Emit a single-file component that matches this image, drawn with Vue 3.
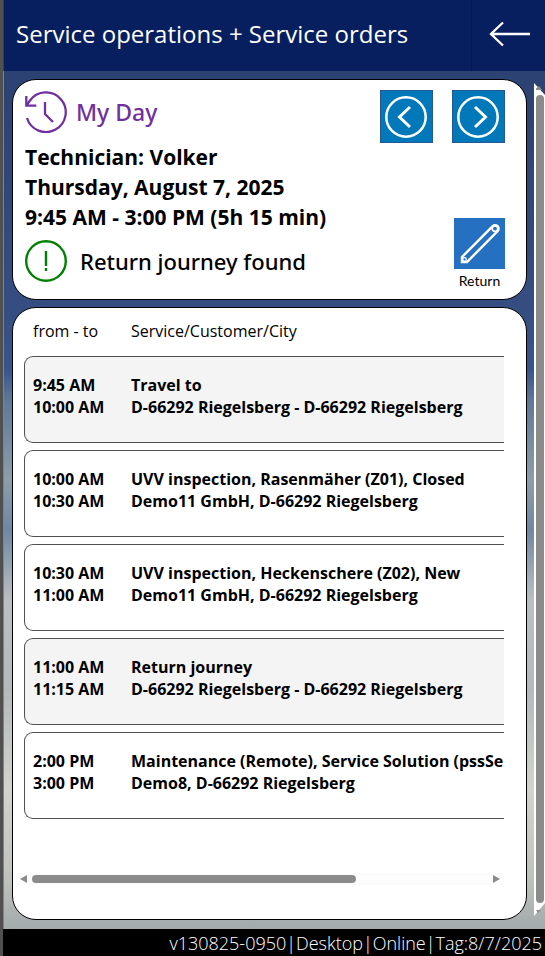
<script setup>
const entries = [
  { from: '9:45 AM', to: '10:00 AM', title: 'Travel to', place: 'D-66292 Riegelsberg - D-66292 Riegelsberg', travel: true },
  { from: '10:00 AM', to: '10:30 AM', title: 'UVV inspection, Rasenmäher (Z01), Closed', place: 'Demo11 GmbH, D-66292 Riegelsberg', travel: false },
  { from: '10:30 AM', to: '11:00 AM', title: 'UVV inspection, Heckenschere (Z02), New', place: 'Demo11 GmbH, D-66292 Riegelsberg', travel: false },
  { from: '11:00 AM', to: '11:15 AM', title: 'Return journey', place: 'D-66292 Riegelsberg - D-66292 Riegelsberg', travel: true },
  { from: '2:00 PM', to: '3:00 PM', title: 'Maintenance (Remote), Service Solution (pssSe', place: 'Demo8, D-66292 Riegelsberg', travel: false },
]
</script>

<template>
  <div class="app">
    <header class="topbar">
      <h1>Service operations + Service orders</h1>
      <button class="back" type="button" aria-label="Back">
        <svg width="42" height="26" viewBox="0 0 42 26" fill="none" stroke="#fff" stroke-width="2.300">
          <path d="M41 13H2M14 1.500L2 13l12 11.500" />
        </svg>
      </button>
    </header>

    <div class="body">
      <main class="cards">
        <section class="card summary">
          <div class="heading">
            <div class="brand">
              <svg width="42" height="42" viewBox="0 0 42 42" fill="none" stroke="#7030a0" stroke-width="2.300">
                <path d="M2 27A19.800 19.800 0 1 0 5 9.500L1.500 14.500" />
                <path d="M1.300 5v9.700h10" />
                <path d="M20 11v12l8 8" />
              </svg>
              <h2>My Day</h2>
            </div>
            <nav class="days">
              <button class="step" type="button" aria-label="Previous day">
                <svg width="42" height="42" viewBox="0 0 42 42" fill="none" stroke="#fff">
                  <circle cx="21" cy="21" r="19.700" stroke-width="2.500" />
                  <path d="M25 11L14.500 21 25 31" stroke-width="3" />
                </svg>
              </button>
              <button class="step" type="button" aria-label="Next day">
                <svg width="42" height="42" viewBox="0 0 42 42" fill="none" stroke="#fff">
                  <circle cx="21" cy="21" r="19.700" stroke-width="2.500" />
                  <path d="M18 11l10.500 10L18 31" stroke-width="3" />
                </svg>
              </button>
            </nav>
          </div>
          <div class="details">
            <div class="facts">
              <p>Technician: Volker</p>
              <p>Thursday, August 7, 2025</p>
              <p>9:45 AM - 3:00 PM (5h 15 min)</p>
              <div class="status">
                <svg width="42" height="42" viewBox="0 0 42 42" fill="none" stroke="#008000" stroke-width="2.400">
                  <circle cx="21" cy="21" r="19.800" />
                  <path d="M21 11v15M21 28v3" />
                </svg>
                <span>Return journey found</span>
              </div>
            </div>
            <button class="return" type="button">
              <span class="tile">
                <svg width="51" height="51" viewBox="0 0 51 51" fill="none" stroke="#fff" stroke-width="2.400">
                  <path d="M8 44v-5L38.700 8.200a3.300 3.300 0 0 1 4.900 4.900L13 44z" />
                  <circle cx="41" cy="10.600" r="2.800" stroke-width="1.700" />
                  <circle cx="10.500" cy="41.500" r="1.800" stroke-width="1.200" />
                </svg>
              </span>
              Return
            </button>
          </div>
        </section>

        <section class="card plan">
          <div class="cols">
            <span>from - to</span>
            <span>Service/Customer/City</span>
          </div>
          <ul class="list">
            <li v-for="e in entries" :key="e.from" :class="{ travel: e.travel }">
              <span>{{ e.from }}<br />{{ e.to }}</span>
              <span>{{ e.title }}<br />{{ e.place }}</span>
            </li>
          </ul>
          <div class="hbar">
            <svg width="7" height="8" viewBox="0 0 7 8"><path d="M7 0v8L0 4z" fill="#8b8b8b" /></svg>
            <div class="track"><div class="thumb"></div></div>
            <svg width="7" height="8" viewBox="0 0 7 8"><path d="M0 0v8l7-4z" fill="#8b8b8b" /></svg>
          </div>
        </section>
      </main>
      <div class="vbar">
        <svg width="11" height="12" viewBox="0 0 11 12"><path d="M0 0l11 12H0z" fill="#fff" /><path d="M2 7V5.500L5 3l3 4z" fill="#8b8b8b" /></svg>
        <div class="vtrack"><div class="vthumb"></div></div>
        <svg width="11" height="13" viewBox="0 0 11 13"><path d="M0 13L11 0H0z" fill="#fff" /><path d="M2 7h5L4 10z" fill="#8b8b8b" /></svg>
      </div>
    </div>

    <footer>v130825-0950|Desktop|Online|Tag:8/7/2025</footer>
  </div>
</template>

<style>
body {
  margin: 0;
}
</style>

<style scoped>
* {
  box-sizing: border-box;
}
h1, h2, p, ul {
  margin: 0;
  padding: 0;
}
svg {
  display: block;
  flex: none;
}
button {
  font: inherit;
  color: inherit;
  padding: 0;
  border: 0;
  background: none;
}
.app {
  min-height: 100vh;
  display: flex;
  flex-direction: column;
  border-left: 3px solid #505050;
  font-family: "Open Sans", "Noto Sans", sans-serif;
  color: #000;
  background: linear-gradient(180deg, #2b4272 70px, #354d80 300px, #38558b 370px, #5f7898 400px, #8d9dab 480px, #6f87a3 530px, #b9c0c3 600px, #b4b9bb 690px, #d2d3cd 790px, #bfc1bd 880px, #a3aaab 929px);
}
.topbar {
  height: 71px;
  flex: none;
  display: flex;
  align-items: stretch;
  background: #081f5f;
  color: #fff;
  border-left: 1px solid #27407d;
}
.topbar h1 {
  flex: 1;
  padding-left: 12px;
  font-size: 24px;
  line-height: 68px;
  font-weight: 400;
  white-space: nowrap;
}
.back {
  width: 74px;
  padding: 0 0 4px 17px;
  border-left: 1px solid #05194f;
}
.body {
  flex: 1;
  display: flex;
  gap: 7px;
  padding: 8px 0 9px 8px;
  border-left: 1px solid #7483a0;
}
.cards {
  flex: 1;
  min-width: 0;
  display: flex;
  flex-direction: column;
  gap: 7px;
}
.card {
  background: #fff;
  border: 1px solid #000;
  border-radius: 24px;
}
.summary {
  height: 221px;
  padding: 10px 21px 0 12px;
}
.heading {
  display: flex;
  justify-content: space-between;
  height: 52px;
}
.brand {
  display: flex;
  gap: 9px;
  padding-top: 1px;
}
.brand h2 {
  font-family: "Noto Sans", "Open Sans", sans-serif;
  font-size: 23px;
  line-height: 42px;
  font-weight: 500;
  color: #7030a0;
}
.days {
  display: flex;
  gap: 19px;
}
.step {
  width: 53px;
  height: 53px;
  padding-left: 4px;
  background: #0078ba;
  border: 1px solid #245793;
}
.details {
  display: flex;
  justify-content: space-between;
}
.facts p {
  font-size: 21px;
  line-height: 30px;
  font-weight: 700;
  white-space: nowrap;
}
.status {
  display: flex;
  align-items: center;
  gap: 13px;
  padding-top: 8px;
  font-family: "Noto Sans", "Open Sans", sans-serif;
  font-size: 22px;
  line-height: 40px;
  font-weight: 500;
  white-space: nowrap;
}
.return {
  align-self: flex-start;
  margin-top: 76px;
  font-family: Lato, "Open Sans", sans-serif;
  font-size: 14px;
  line-height: 23px;
  text-align: center;
}
.tile {
  display: block;
  background: #2670c2;
}
.plan {
  flex: 1;
  padding: 12px 22px 0 11px;
}
.cols {
  display: grid;
  grid-template-columns: 98px 1fr;
  padding-left: 9px;
  font-size: 16px;
  line-height: 22px;
}
.list {
  list-style: none;
  display: flex;
  flex-direction: column;
  gap: 7px;
  margin-top: 14px;
}
.list li {
  display: grid;
  grid-template-columns: 98px 1fr;
  height: 87px;
  padding: 17px 0 0 8px;
  border: 1px solid #505050;
  border-right: 0;
  border-radius: 9px 0 0 9px;
  font-size: 16px;
  line-height: 22px;
  font-weight: 700;
  white-space: nowrap;
  overflow: hidden;
}
.list li.travel {
  background: #f4f4f4;
}
.hbar {
  display: flex;
  align-items: center;
  gap: 5px;
  height: 12px;
  margin: 54px 0 0 -8px;
  padding: 0 4px;
  background: #fcfcfc;
}
.track {
  flex: 1;
}
.thumb {
  width: 71%;
  height: 8px;
  border-radius: 4px;
  background: #8b8b8b;
}
.vbar {
  width: 11px;
  display: flex;
  flex-direction: column;
  padding: 4px 0 4px;
}
.vtrack {
  flex: 1;
  padding: 0 1px 0 2px;
  background: #fff;
}
.vthumb {
  height: 100%;
  border-radius: 4px;
  background: #8b8b8b;
}
footer {
  height: 27px;
  flex: none;
  padding-right: 3px;
  background: #000;
  color: #fff;
  font-size: 18px;
  line-height: 29px;
  font-weight: 300;
  text-align: right;
  white-space: nowrap;
}
</style>
